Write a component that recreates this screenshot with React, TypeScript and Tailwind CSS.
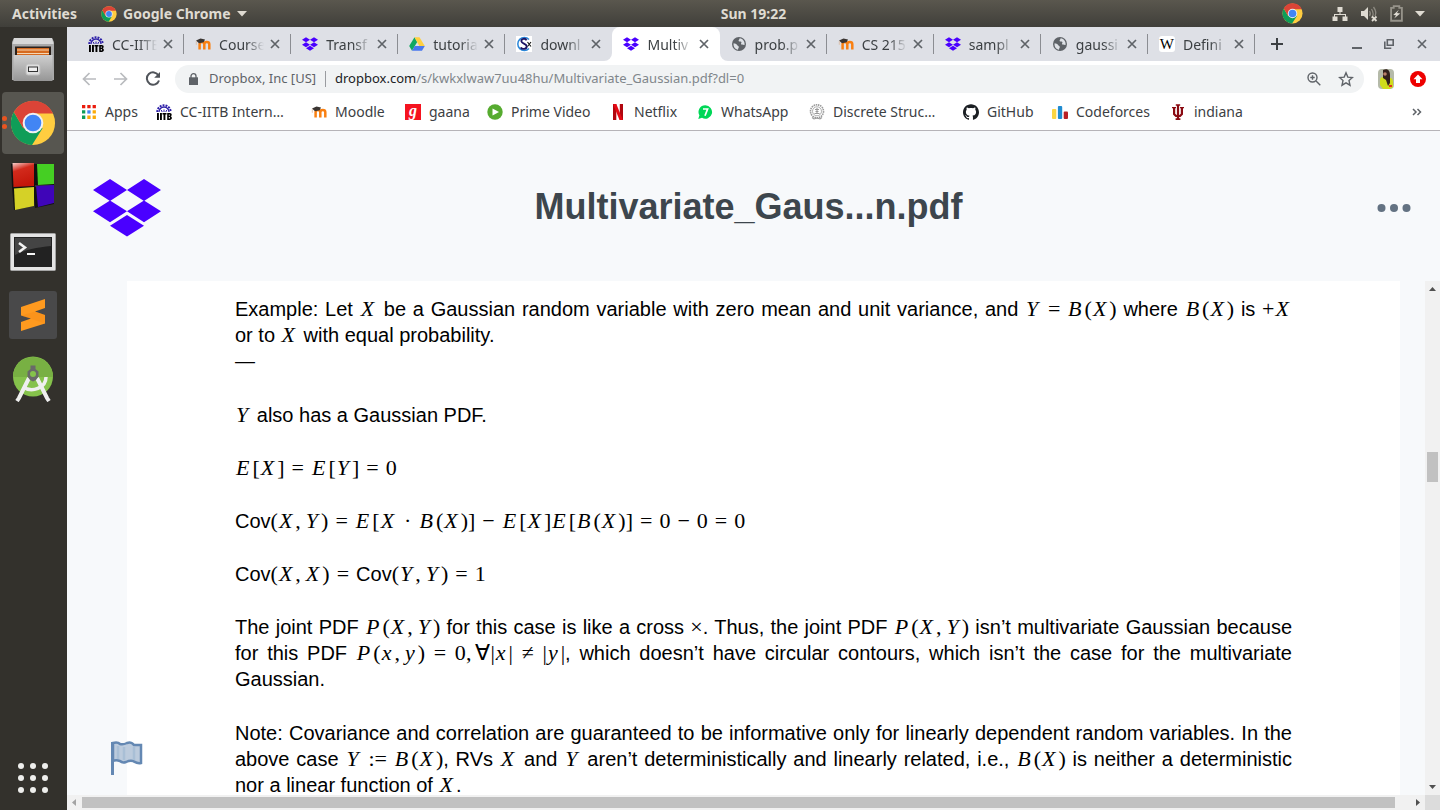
import React from "react";
import { SiGithub } from "react-icons/si";

type IconProps = { className?: string };

const ChromeLogo = ({ className }: IconProps) => (
  <svg viewBox="0 0 48 48" className={className} aria-hidden="true">
    <circle cx="24" cy="24" r="23" fill="#ffcd40" />
    <path d="M4 12.600A23 23 0 0 0 23 47L34 29.500 24 24l-10 5.500z" fill="#0f9d58" />
    <path d="M4 12.600A23 23 0 0 1 45 14H24L14 29.700z" fill="#db4437" />
    <circle cx="24" cy="24" r="10.800" fill="#f1f1f1" />
    <circle cx="24" cy="24" r="8.700" fill="#4285f4" />
  </svg>
);

const DropboxLogo = ({ className }: IconProps) => (
  <svg viewBox="0 0 68 58" className={className} fill="#4a00ff" aria-hidden="true">
    <path d="M17 0 34 11 17 22 0 11zM51 0 68 11 51 22 34 11zM17 21.500 34 32.300 17 43.200 0 32.300zM51 21.500 68 32.300 51 43.200 34 32.300zM34 36 51 46.800 34 57.600 17 46.800z" />
  </svg>
);

const IitbIcon = ({ className }: IconProps) => (
  <svg viewBox="0 0 16 16" className={className} aria-hidden="true">
    <path d="M1.300 8A6.700 6.700 0 0 1 14.700 8" fill="none" stroke="#2d1fa8" strokeWidth="2" strokeDasharray="1.900 1.100" />
    <path d="M3 8a5 5 0 0 1 10 0" fill="none" stroke="#2d1fa8" strokeWidth="1.300" />
    <path d="M8 8V5.500M6.200 8 5.300 6M9.800 8l.9-2" stroke="#2d1fa8" strokeWidth="1" />
    <path d="M1 9h1.900v7H1zM4 9h1.900v7H4zM6.500 9h4v1.600H9.400V16H7.500v-5.400h-1zM11.200 9h2.600c2.400 0 2.300 2.900.8 3.300 1.900.5 1.700 3.700-.8 3.700h-2.600zm1.600 1.400v1.400h1v-1.400zm0 2.700v1.500h1.100v-1.500z" fill="#000" fillRule="evenodd" />
  </svg>
);

const MoodleIcon = ({ className }: IconProps) => (
  <svg viewBox="0 0 16 16" className={className} aria-hidden="true">
    <path d="M4.600 13.500V8.200c0-2.800 4.700-2.800 4.700 0v5.300m0-5.300c0-2.800 5-2.800 5 0v5.300" fill="none" stroke="#f98012" strokeWidth="2.500" />
    <path d="M1 4.500 5.500 2.400 10 3.600 8.700 6.300 4 7.200z" fill="#3a3532" />
    <path d="M1.300 4.800v4" stroke="#d9b9a0" strokeWidth="0.800" />
  </svg>
);

const DriveIcon = ({ className }: IconProps) => (
  <svg viewBox="0 0 16 16" className={className} aria-hidden="true">
    <path d="M5.500 1.200 8.200 6 3 14.800.2 10z" fill="#11a861" />
    <path d="M5.500 1.200h5l5.300 8.800h-5.500z" fill="#ffcf3f" />
    <path d="M5.800 10H15.800L13 14.800H3z" fill="#4a78ee" />
  </svg>
);

const ScilabIcon = ({ className }: IconProps) => (
  <svg viewBox="0 0 16 16" className={className} aria-hidden="true">
    <path d="M0 0h16v16H0z" fill="#fff" />
    <path d="M13 3.500A6.500 6.500 0 1 0 13 12.500" fill="none" stroke="#2a86d8" strokeWidth="1.500" />
    <path d="M10.500 4.300C9.500 1.800 5 2.500 5.400 5.300c.4 2.400 5 2.200 5.300 5 .2 3-4.700 3.600-5.900 1" fill="none" stroke="#1b1464" strokeWidth="1.800" />
    <path d="m11.500 6 3.500 4.500M15 6l-3.500 4.500" stroke="#111" strokeWidth="1.100" />
  </svg>
);

const GlobeIcon = ({ className }: IconProps) => (
  <svg viewBox="0 0 16 16" className={className} aria-hidden="true">
    <circle cx="8" cy="8" r="7" fill="#5f6368" />
    <path d="M2.600 7.200c1.300.2 2.900.6 3.500 1.800.4 1 1.700.9 1.700 2 0 1.200-.8 1.300-.8 2.700-2.700-.3-5-3.200-4.400-6.500zM8.600 2.300c-.1 1.300-.8 1.300-1 2.300-.2.900.7 1 1.900.9.900 0 1.200 1 .7 1.700-.5.600-.2 1.400.8 1.400 1.100 0 1.800.7 2.500.4.600-3-1.300-6.200-4.900-6.700z" fill="#dee1e6" />
  </svg>
);

const WikiIcon = ({ className }: IconProps) => (
  <span className={`${className} flex items-center justify-center rounded-[3px] bg-white font-['Liberation_Serif',serif] text-[15px] leading-none text-black`}>W</span>
);

const AppsIcon = ({ className }: IconProps) => (
  <svg viewBox="0 0 16 16" className={className} aria-hidden="true">
    <path d="M1 1h3.300v3.300H1zM6.300 1h3.300v3.300H6.300zM11.600 1h3.300v3.300h-3.300z" fill="#ea1c0d" />
    <path d="M1 6.300h3.300v3.300H1zM1 11.600h3.300v3.300H1z" fill="#0f9d58" />
    <path d="M6.300 6.300h3.300v3.300H6.300z" fill="#4285f4" />
    <path d="M11.600 6.300h3.300v3.300h-3.300zM11.600 11.600h3.300v3.300h-3.300zM6.300 11.600h3.300v3.300H6.300z" fill="#fbab09" />
  </svg>
);

const GaanaIcon = ({ className }: IconProps) => (
  <span className={`${className} flex items-center justify-center bg-[#f5131f] pb-[2px] font-['Liberation_Serif',serif] text-[16px] leading-none font-bold text-white italic`}>g</span>
);

const PrimeIcon = ({ className }: IconProps) => (
  <svg viewBox="0 0 16 16" className={className} aria-hidden="true">
    <circle cx="8" cy="8" r="7.700" fill="#56ab2f" />
    <path d="M5.500 4.500 12 8l-6.500 3.500z" fill="#fff" />
  </svg>
);

const NetflixIcon = ({ className }: IconProps) => (
  <svg viewBox="0 0 16 16" className={className} aria-hidden="true">
    <path d="M3 0h3.300v16L3 16.200zM9.800 0H13v16.200L9.800 16z" fill="#b1060f" />
    <path d="M3 0h3.300L13 16.200 9.500 16z" fill="#e50914" />
  </svg>
);

const WhatsAppIcon = ({ className }: IconProps) => (
  <svg viewBox="0 0 16 16" className={className} aria-hidden="true">
    <path d="M8.300 1.300a6.700 6.700 0 1 1-3.300 12.500L1.300 15l1.100-3.700A6.700 6.700 0 0 1 8.300 1.300z" fill="#00d757" />
    <path d="M6 5h4.600L8 11.800" fill="none" stroke="#fff" strokeWidth="1.700" />
  </svg>
);

const SealIcon = ({ className }: IconProps) => (
  <svg viewBox="0 0 16 16" className={className} fill="none" stroke="#9a9a9a" aria-hidden="true">
    <circle cx="8" cy="7.300" r="6.500" strokeWidth="1.600" strokeDasharray="1.500 .7" />
    <circle cx="8" cy="7.300" r="4.500" strokeWidth="0.800" />
    <path d="M6 5.500h4M6.500 7.500h3M5.500 9.500h5M8 4v6M3 13.500l2 1.500 3-1 3 1 2-1.500" strokeWidth="1.100" />
  </svg>
);

const BarsIcon = ({ className }: IconProps) => (
  <svg viewBox="0 0 16 16" className={className} aria-hidden="true">
    <rect y="5" width="4.300" height="10" rx="1" fill="#fbd542" />
    <rect x="5.900" y="2" width="4.300" height="13" rx="1" fill="#1f8bd0" />
    <rect x="11.700" y="7.500" width="4.300" height="7.500" rx="1" fill="#b81f24" />
  </svg>
);

const TridentIcon = ({ className }: IconProps) => (
  <svg viewBox="0 0 16 16" className={className} aria-hidden="true">
    <path d="M2 3h4v1.300H5.200v5.500l1.700 1.400V1.800H5.800V.3h4.400v1.500H9.100v9.400l1.700-1.400V4.300H10V3h4v1.300h-1v6.200L10.500 13H9.100v1.300h1.300V16H5.600v-1.700h1.300V13H5.500L3 10.500V4.300H2z" fill="#8a0a12" />
  </svg>
);

const CloseX = ({ className }: IconProps) => (
  <svg viewBox="0 0 10 10" className={className} aria-hidden="true">
    <path d="m1 1 8 8M9 1 1 9" stroke="#5f6368" strokeWidth="1.700" />
  </svg>
);

const tabs = [
  { title: "CC-IITB", Icon: IitbIcon },
  { title: "Course", Icon: MoodleIcon },
  { title: "Transf", Icon: DropboxLogo },
  { title: "tutoria", Icon: DriveIcon },
  { title: "downl", Icon: ScilabIcon },
  { title: "Multiv", Icon: DropboxLogo, active: true },
  { title: "prob.p", Icon: GlobeIcon },
  { title: "CS 215", Icon: MoodleIcon },
  { title: "sampl", Icon: DropboxLogo },
  { title: "gaussi", Icon: GlobeIcon },
  { title: "Defini", Icon: WikiIcon },
];

const bookmarks = [
  { title: "Apps", Icon: AppsIcon, width: "w-[75px]" },
  { title: "CC-IITB Intern…", Icon: IitbIcon, width: "w-[155px]" },
  { title: "Moodle", Icon: MoodleIcon, width: "w-[94px]" },
  { title: "gaana", Icon: GaanaIcon, width: "w-[82px]" },
  { title: "Prime Video", Icon: PrimeIcon, width: "w-[123px]" },
  { title: "Netflix", Icon: NetflixIcon, width: "w-[87px]" },
  { title: "WhatsApp", Icon: WhatsAppIcon, width: "w-[112px]" },
  { title: "Discrete Struc…", Icon: SealIcon, width: "w-[154px]" },
  { title: "GitHub", Icon: SiGithub, width: "w-[89px]" },
  { title: "Codeforces", Icon: BarsIcon, width: "w-[118px]" },
  { title: "indiana", Icon: TridentIcon, width: "w-[80px]" },
];

const TopBar = () => (
  <header className="grid h-[27px] shrink-0 grid-cols-[1fr_auto_1fr] items-center bg-linear-to-b from-[#5a574e] to-[#403f3a] text-[14px] font-bold text-[#dfdbd2]">
    <div className="flex items-center pl-3">
      <button>Activities</button>
      <button className="ml-6 flex items-center gap-[6px]">
        <ChromeLogo className="size-4" />
        Google Chrome
        <svg viewBox="0 0 10 6" className="h-[6px] w-[10px]" fill="#dfdbd2" aria-hidden="true"><path d="M0 0h10L5 5.500z" /></svg>
      </button>
    </div>
    <time className="pl-[67px]">Sun 19:22</time>
    <div className="flex items-center justify-end pr-[15px]">
      <ChromeLogo className="mr-[29px] size-[21px]" />
      <svg viewBox="0 0 16 16" className="mr-3 size-4" fill="#dfdbd2" aria-hidden="true">
        <path d="M5.500 1h5v5h-2v2H14v2.500h1.500V15h-5v-4.500H13V9H3v1.500h2.500V15h-5v-4.500H2V8h5.500V6h-2z" />
      </svg>
      <svg viewBox="0 0 18 16" className="mr-3 h-4 w-[18px]" aria-hidden="true">
        <path d="M1 5h3l4-4v13l-4-4H1z" fill="#dfdbd2" />
        <path d="M9.500 5c1 1.600 1 3.600 0 5M11.500 3c2 3 2 6.500 0 9M13.500 1c2.500 3.500 2.500 7 1.500 9" fill="none" stroke="#8c8980" strokeWidth="1.300" />
        <path d="m12 10.500 4.500 4.500m0-4.500L12 15" stroke="#dfdbd2" strokeWidth="1.800" />
      </svg>
      <svg viewBox="0 0 14 18" className="mr-3 h-[17px] w-[13px]" aria-hidden="true">
        <path d="M1.200 3H4V1h6v2h2.800v13.800H1.200z" fill="none" stroke="#96938a" strokeWidth="2" />
        <path d="m9.500 5-6 5.500 3 .5-2 3.500 6.500-5.500-3.500-.6z" fill="#dfdbd2" />
      </svg>
      <svg viewBox="0 0 10 6" className="h-[6px] w-[10px]" fill="#dfdbd2" aria-hidden="true"><path d="M0 0h10L5 5.500z" /></svg>
    </div>
  </header>
);

const Launcher = () => (
  <nav aria-label="Launcher" className="flex w-[67px] shrink-0 flex-col items-center bg-[#33312c] pr-[2px] pb-[17px]">
    <button aria-label="Files" className="flex h-[65px] w-full items-center justify-center">
      <svg viewBox="0 0 42 44" className="h-[44px] w-[42px]">
        <defs>
          <linearGradient id="cabinet" x2="0" y2="1"><stop stopColor="#cfcfcf" /><stop offset="1" stopColor="#969696" /></linearGradient>
        </defs>
        <path d="M2 0h38l2 4v38H0V4z" fill="#a9a9a9" />
        <path d="M2 0h38l1.500 6H.5z" fill="#d8d8d8" />
        <path d="M3 8.500h36V17H3z" fill="#2b211b" />
        <path d="M5 10h32v7H5z" fill="#d66a1f" />
        <path d="M5 12h32M5 15.500h32" stroke="#f5d6b3" strokeWidth="1" />
        <path d="M1.500 17h39v26h-39z" fill="url(#cabinet)" />
        <rect x="14" y="26" width="14" height="11" rx="2" fill="#dedede" stroke="#bcbcbc" />
        <rect x="16.500" y="29" width="9" height="4.500" fill="#eee" stroke="#333" />
      </svg>
    </button>
    <button aria-label="Google Chrome" className="relative flex h-[62px] w-[62px] items-center justify-center rounded-[4px] bg-[#575650]">
      <ChromeLogo className="size-[46px]" />
      <span className="absolute top-[24px] left-0 flex flex-col gap-[3px]">
        <i className="size-[5px] rounded-full bg-[#e95420]" />
        <i className="size-[5px] rounded-full bg-[#e95420]" />
      </span>
    </button>
    <button aria-label="Code::Blocks" className="flex h-[66px] w-full items-center justify-center">
      <svg viewBox="0 0 44 48" className="h-[48px] w-[44px]">
        <defs>
          <linearGradient id="redCube" x2=".3" y2="1"><stop stopColor="#f7d0cc" /><stop offset=".35" stopColor="#d22a1c" /><stop offset="1" stopColor="#c4170a" /></linearGradient>
        </defs>
        <path d="M0 1h24v23H1zM24 1h19v21H24zM1 24h22v19L3 47zM22 24h21v17l-19 4z" fill="#111" />
        <path d="M1.500 0H23v23L2.500 24z" fill="url(#redCube)" />
        <path d="M26 1h17v20l-16 1z" fill="#45cf23" />
        <path d="M3 25.500 23 24v19L4 47z" fill="#d5d127" />
        <path d="M25 23l18-1v18l-16 4z" fill="#3f05b8" />
      </svg>
    </button>
    <button aria-label="Terminal" className="flex h-[64px] w-full items-center justify-center">
      <svg viewBox="0 0 46 38" className="h-[38px] w-[46px]">
        <rect x=".5" y=".5" width="45" height="37" rx="1" fill="#e4e4e4" stroke="#a5a5a5" />
        <path d="M4 4h38v30H4z" fill="#222" />
        <path d="M5 5h36v8C28 14 14 17 5 22z" fill="#444" />
        <path d="m9 10 6 4.500L9 19" fill="none" stroke="#f4f4f4" strokeWidth="2.500" />
        <path d="M17 21h8" stroke="#f4f4f4" strokeWidth="2" />
      </svg>
    </button>
    <button aria-label="Sublime Text" className="flex h-[62px] w-full items-center justify-center">
      <svg viewBox="0 0 48 48" className="size-12">
        <rect width="48" height="48" rx="3" fill="#49494a" />
        <path d="M12 16 36 8v9L26 20.500l10 3.500v8.500L12 40v-9l10-3.500L12 24.500z" fill="#ff9a1f" />
        <path d="m12 24.500 14-4 10 3.500v8.500z" fill="#ee8413" opacity=".3" />
      </svg>
    </button>
    <button aria-label="Android Studio" className="flex h-[66px] w-full items-center justify-center">
      <svg viewBox="0 0 42 46" className="h-[46px] w-[42px]">
        <circle cx="21" cy="20.500" r="20" fill="#85c24b" />
        <path d="M1 21a20 20 0 0 1 40 0z" fill="#78b043" />
        <path d="M11 31c9 6 23 1 23-10" fill="none" stroke="#efefef" strokeWidth="3.500" />
        <path d="M17 22 7 42l-2 3M25 22l10 20 2 3" fill="none" stroke="#efefef" strokeWidth="4" />
        <path d="M18.500 9.500h5V13l3 2.500v5L24 24l-3 1.500-3-1.500-2.500-3.500v-5l3-2.500z" fill="#696969" />
        <circle cx="21" cy="18" r="3" fill="#85c24b" />
      </svg>
    </button>
    <button aria-label="Show applications" className="mt-auto grid grid-cols-3 gap-[6px]">
      {Array.from({ length: 9 }, (_, i) => (
        <i key={i} className="size-[6px] rounded-full bg-[#eeeeec]" />
      ))}
    </button>
  </nav>
);

const tabShape = (i: number) => {
  if (tabs[i].active) return "rounded-t-lg bg-white";
  if (tabs[i + 1]?.active) return "rounded-br-lg bg-[#dee0e6]";
  if (tabs[i - 1]?.active) return "rounded-bl-lg bg-[#dee0e6]";
  return "bg-[#dee0e6]";
};

const TabStrip = () => (
  <div className="flex h-[34px] shrink-0 bg-[#dee0e6] pl-[10px]">
    <div role="tablist" className="flex min-w-0 flex-1 bg-linear-to-b from-[#dee0e6] from-50% to-white to-50%">
      {tabs.map(({ title, Icon, active }, i) => (
        <div key={i} className={`flex min-w-0 flex-1 items-center pl-[11px] ${tabShape(i)}`}>
          <button role="tab" aria-selected={!!active} className="flex min-w-0 flex-1 items-center gap-2">
            <Icon className="size-4 shrink-0" />
            <span className="w-[45px] overflow-hidden mask-r-from-60% mask-r-to-100% text-left text-[14px] whitespace-nowrap text-[#3c4043]">{title}</span>
          </button>
          <button aria-label={`Close ${title}`} className="mr-[10px]">
            <CloseX className="size-[10px]" />
          </button>
          <span className={`h-5 w-px ${active || tabs[i + 1]?.active ? "" : "bg-[#8b8d92]"}`} />
        </div>
      ))}
    </div>
    <div className="flex w-[185px] shrink-0 items-center pr-[13px] pl-4">
      <button aria-label="New tab">
        <svg viewBox="0 0 12 12" className="size-3"><path d="M6 0v12M0 6h12" stroke="#3c4043" strokeWidth="2" /></svg>
      </button>
      <button aria-label="Minimize" className="ml-auto">
        <svg viewBox="0 0 10 10" className="size-[10px]"><path d="M0 9h10" stroke="#5f6368" strokeWidth="2" /></svg>
      </button>
      <button aria-label="Restore" className="ml-[22px]">
        <svg viewBox="0 0 10 10" className="size-[10px]" fill="none" stroke="#5f6368" strokeWidth="1.600"><path d="M3.300.8h5.900v5.400H3.300zM.8 2.500v6.700h6.500" /></svg>
      </button>
      <button aria-label="Close window" className="ml-[23px]">
        <CloseX className="size-[10px]" />
      </button>
    </div>
  </div>
);

const Arrow = ({ className }: IconProps) => (
  <svg viewBox="0 0 14 14" className={className} fill="none" stroke="#b9bbbe" strokeWidth="1.700" aria-hidden="true"><path d="M14 7H1.500M7.500 1 1.500 7l6 6" /></svg>
);

const Toolbar = () => (
  <div className="flex h-9 shrink-0 items-center bg-white pr-[14px] pl-[15px]">
    <button aria-label="Back"><Arrow className="size-[14px]" /></button>
    <button aria-label="Forward" className="ml-[18px]"><Arrow className="size-[14px] rotate-180" /></button>
    <button aria-label="Reload" className="ml-[17px]">
      <svg viewBox="0 0 16 16" className="size-4" fill="none" stroke="#50545a" strokeWidth="2"><path d="M13.500 4.500A6.200 6.200 0 1 0 14 9.500" /><path d="M15 1v5.800H9.200z" fill="#50545a" stroke="none" /></svg>
    </button>
    <div className="ml-[14px] flex h-7 min-w-0 flex-1 items-center rounded-full bg-[#f1f3f4] pr-[10px] pl-[14px] text-[13px]">
      <svg viewBox="0 0 9 12" className="mr-[11px] h-3 w-[9px]" aria-hidden="true"><path d="M0 4.300h9V12H0z" fill="#5f6368" /><path d="M2 5V3a2.500 2.300 0 0 1 5 0v2" fill="none" stroke="#5f6368" strokeWidth="1.300" /></svg>
      <span className="w-[109px] whitespace-nowrap text-[#5f6368]">Dropbox, Inc [US]</span>
      <span className="mr-[9px] ml-[7px] h-4 w-px bg-[#9a9ca0]" />
      <span className="flex-1 whitespace-nowrap text-[#80868b]"><span className="text-[#202124]">dropbox.com</span>/s/kwkxlwaw7uu48hu/Multivariate_Gaussian.pdf?dl=0</span>
      <button aria-label="Zoom">
        <svg viewBox="0 0 14 14" className="size-[14px]" fill="none" stroke="#5f6368" strokeWidth="1.400"><circle cx="5.500" cy="5.500" r="4.500" /><path d="m9 9 4.300 4.300M3.300 5.500h4.400M5.500 3.300v4.400" /></svg>
      </button>
      <button aria-label="Bookmark this page" className="ml-[17px]">
        <svg viewBox="0 0 16 16" className="size-4" fill="none" stroke="#5f6368" strokeWidth="1.400"><path d="m8 1.800 1.800 4.300 4.700.4-3.500 3.100 1 4.600L8 11.800l-4 2.400 1-4.600-3.500-3.100 4.700-.4z" /></svg>
      </button>
    </div>
    <button aria-label="Profile" className="ml-[14px]">
      <svg viewBox="0 0 16 20" className="h-5 w-4">
        <rect width="16" height="20" rx="4" fill="#b5baa9" />
        <path d="M2 10c1-2 3-2 4-2l7 1c2 1 2 3 2 5v4l-3 2H5l-3-4z" fill="#cfdc1c" />
        <path d="M5 1c5-2 7 1 7 5l0 8-2 3-2-6-3-2z" fill="#33211c" />
        <circle cx="7" cy="5" r="1.800" fill="#b98068" />
        <path d="M11 16h3v2h-3z" fill="#e0331f" />
      </svg>
    </button>
    <button aria-label="Update available" className="ml-4">
      <svg viewBox="0 0 16 16" className="size-4"><circle cx="8" cy="8" r="8" fill="#ee0000" /><path d="m8 3.500 4.500 4.800H10V12H6V8.300H3.500z" fill="#fff" /></svg>
    </button>
  </div>
);

const Bookmarks = () => (
  <div className="flex h-[34px] shrink-0 items-center border-b border-[#b6b4b8] bg-white pr-[18px] pb-1 pl-[14px] text-[14px] text-[#3c4043]">
    {bookmarks.map(({ title, Icon, width }) => (
      <a key={title} href="#" className={`flex shrink-0 items-center gap-2 whitespace-nowrap ${width}`}>
        <Icon className="size-4 shrink-0 text-[#1b1f23]" />
        {title}
      </a>
    ))}
    <button aria-label="More bookmarks" className="ml-auto">
      <svg viewBox="0 0 10 8" className="h-2 w-[10px]" fill="none" stroke="#5f6368" strokeWidth="1.500"><path d="m1 1 3 3-3 3M5.500 1l3 3-3 3" /></svg>
    </button>
  </div>
);

type Kids = { children: React.ReactNode };

/* Math run, variable, upright glyph and spaced operator. */
const M = ({ children }: Kids) => (
  <span className="font-['Liberation_Serif',serif] text-[22px] whitespace-nowrap">{children}</span>
);
const V = ({ children }: Kids) => <i className="mr-[3px] ml-px">{children}</i>;
const Op = ({ children }: Kids) => <span className="mx-[7px]">{children}</span>;
const Comma = () => <span className="mr-1">,</span>;
const BX = () => <><V>B</V>(<V>X</V>)</>;
const PXY = () => <><V>P</V>(<V>X</V><Comma /><V>Y</V>)</>;

const Para = ({ children }: Kids) => <p className="flex flex-col pb-px">{children}</p>;
const Full = ({ children }: Kids) => (
  <span className="block text-justify [text-align-last:justify]">{children} </span>
);

const Document = () => (
  <article className="flex flex-col gap-[27px] pt-[15px] text-[20px] leading-[26px] text-black">
    <Para>
      <Full>Example: Let <M><V>X</V></M> be a Gaussian random variable with zero mean and unit variance, and <M><V>Y</V> = <BX /></M> where <M><BX /></M> is <M>+<V>X</V></M></Full>
      <span>or to <M><V>X</V></M> with equal probability.</span>
      <span>—</span>
    </Para>
    <p><M><V>Y</V></M> also has a Gaussian PDF.</p>
    <p><M><V>E</V>[<V>X</V>]<Op>=</Op><V>E</V>[<V>Y</V>]<Op>=</Op>0</M></p>
    <p>Cov<M>(<V>X</V><Comma /><V>Y</V>)<Op>=</Op><V>E</V>[<V>X</V><Op>·</Op><BX />]<Op>−</Op><V>E</V>[<V>X</V>]<V>E</V>[<BX />]<Op>=</Op>0<Op>−</Op>0<Op>=</Op>0</M></p>
    <p>Cov<M>(<V>X</V><Comma /><V>X</V>)<Op>=</Op></M>Cov<M>(<V>Y</V><Comma /><V>Y</V>)<Op>=</Op>1</M></p>
    <Para>
      <Full>The joint PDF <M><PXY /></M> for this case is like a cross <M>×</M>. Thus, the joint PDF <M><PXY /></M> isn’t multivariate Gaussian because</Full>
      <Full>for this PDF <M><V>P</V>(<V>x</V><Comma /><V>y</V>) = 0<Comma />∀|<V>x</V>| ≠ |<V>y</V>|</M>, which doesn’t have circular contours, which isn’t the case for the multivariate</Full>
      <span>Gaussian.</span>
    </Para>
    <Para>
      <Full>Note: Covariance and correlation are guaranteed to be informative only for linearly dependent random variables. In the</Full>
      <Full>above case <M><V>Y</V> := <BX /></M>, RVs <M><V>X</V></M> and <M><V>Y</V></M> aren’t deterministically and linearly related, i.e., <M><BX /></M> is neither a deterministic</Full>
      <span>nor a linear function of <M><V>X</V></M>.</span>
    </Para>
  </article>
);

export default function App() {
  return (
    <div className="flex h-screen flex-col overflow-hidden font-['Noto_Sans',sans-serif]">
      <TopBar />
      <div className="flex min-h-0 flex-1">
        <Launcher />
        <div className="flex min-w-0 flex-1 flex-col bg-[#f7f9fb]">
          <TabStrip />
          <Toolbar />
          <Bookmarks />
          <div className="flex h-[150px] shrink-0 items-center justify-between pt-[4px] pr-[29px] pl-[26px]">
            <a href="#" aria-label="Dropbox"><DropboxLogo className="h-[58px] w-[68px]" /></a>
            <h1 className="pr-[41px] pb-[3px] font-['Liberation_Sans',sans-serif] text-[36px] leading-none font-bold text-[#3d464d]">Multivariate_Gaus...n.pdf</h1>
            <button aria-label="More options">
              <svg viewBox="0 0 34 8" className="h-2 w-[34px]" fill="#637282"><circle cx="4.500" cy="4" r="4" /><circle cx="17" cy="4" r="4" /><circle cx="29.500" cy="4" r="4" /></svg>
            </button>
          </div>
          <div className="flex min-h-0 flex-1">
            <main className="relative min-w-0 flex-1 overflow-hidden pr-[25px] pl-[60px]">
              <div className="h-full bg-white px-[108px] font-['Liberation_Sans',sans-serif]">
                <Document />
              </div>
              <svg viewBox="0 0 34 38" className="absolute bottom-[18px] left-[43px] h-[38px] w-[34px]" aria-hidden="true">
                <path d="M3 4c4-1 6 0 7 1 3 1 5 0 7-1 4-1 5 0 7 2l7 0v18c-4 1-6-1-8-2-3-1-5 0-7 1-3 1-5 0-6-1-3-1-5-1-7 0z" fill="#bccbdd" stroke="#6488b3" strokeWidth="2.500" />
                <path d="M2.500 3v33" stroke="#6488b3" strokeWidth="3" />
                <path d="M8 7v13M14 8v13M24 8v13" stroke="#a9bfd6" strokeWidth="2.500" />
              </svg>
            </main>
            <div className="flex w-[15px] shrink-0 flex-col items-center bg-[#f1f1f1] py-[6px]">
              <svg viewBox="0 0 7 4" className="h-1 w-[7px]" fill="#505050" aria-hidden="true"><path d="M3.500 0 7 4H0z" /></svg>
              <div className="mt-[161px] h-[30px] w-[11px] bg-[#c1c1c1]" />
              <svg viewBox="0 0 7 4" className="mt-auto h-1 w-[7px]" fill="#505050" aria-hidden="true"><path d="M0 0h7L3.500 4z" /></svg>
            </div>
          </div>
          <div className="flex h-[15px] shrink-0 items-center bg-[#f1f1f1] pl-[5px]">
            <svg viewBox="0 0 4 7" className="mr-[6px] h-[7px] w-1" fill="#a3a3a3" aria-hidden="true"><path d="M4 0v7L0 3.500z" /></svg>
            <div className="h-[11px] flex-1 bg-[#c1c1c1]" />
            <svg viewBox="0 0 4 7" className="mr-[5px] ml-[21px] h-[7px] w-1" fill="#505050" aria-hidden="true"><path d="M0 0v7l4-3.500z" /></svg>
            <div className="size-[15px] bg-[#dcdcdc]" />
          </div>
        </div>
      </div>
    </div>
  );
}
